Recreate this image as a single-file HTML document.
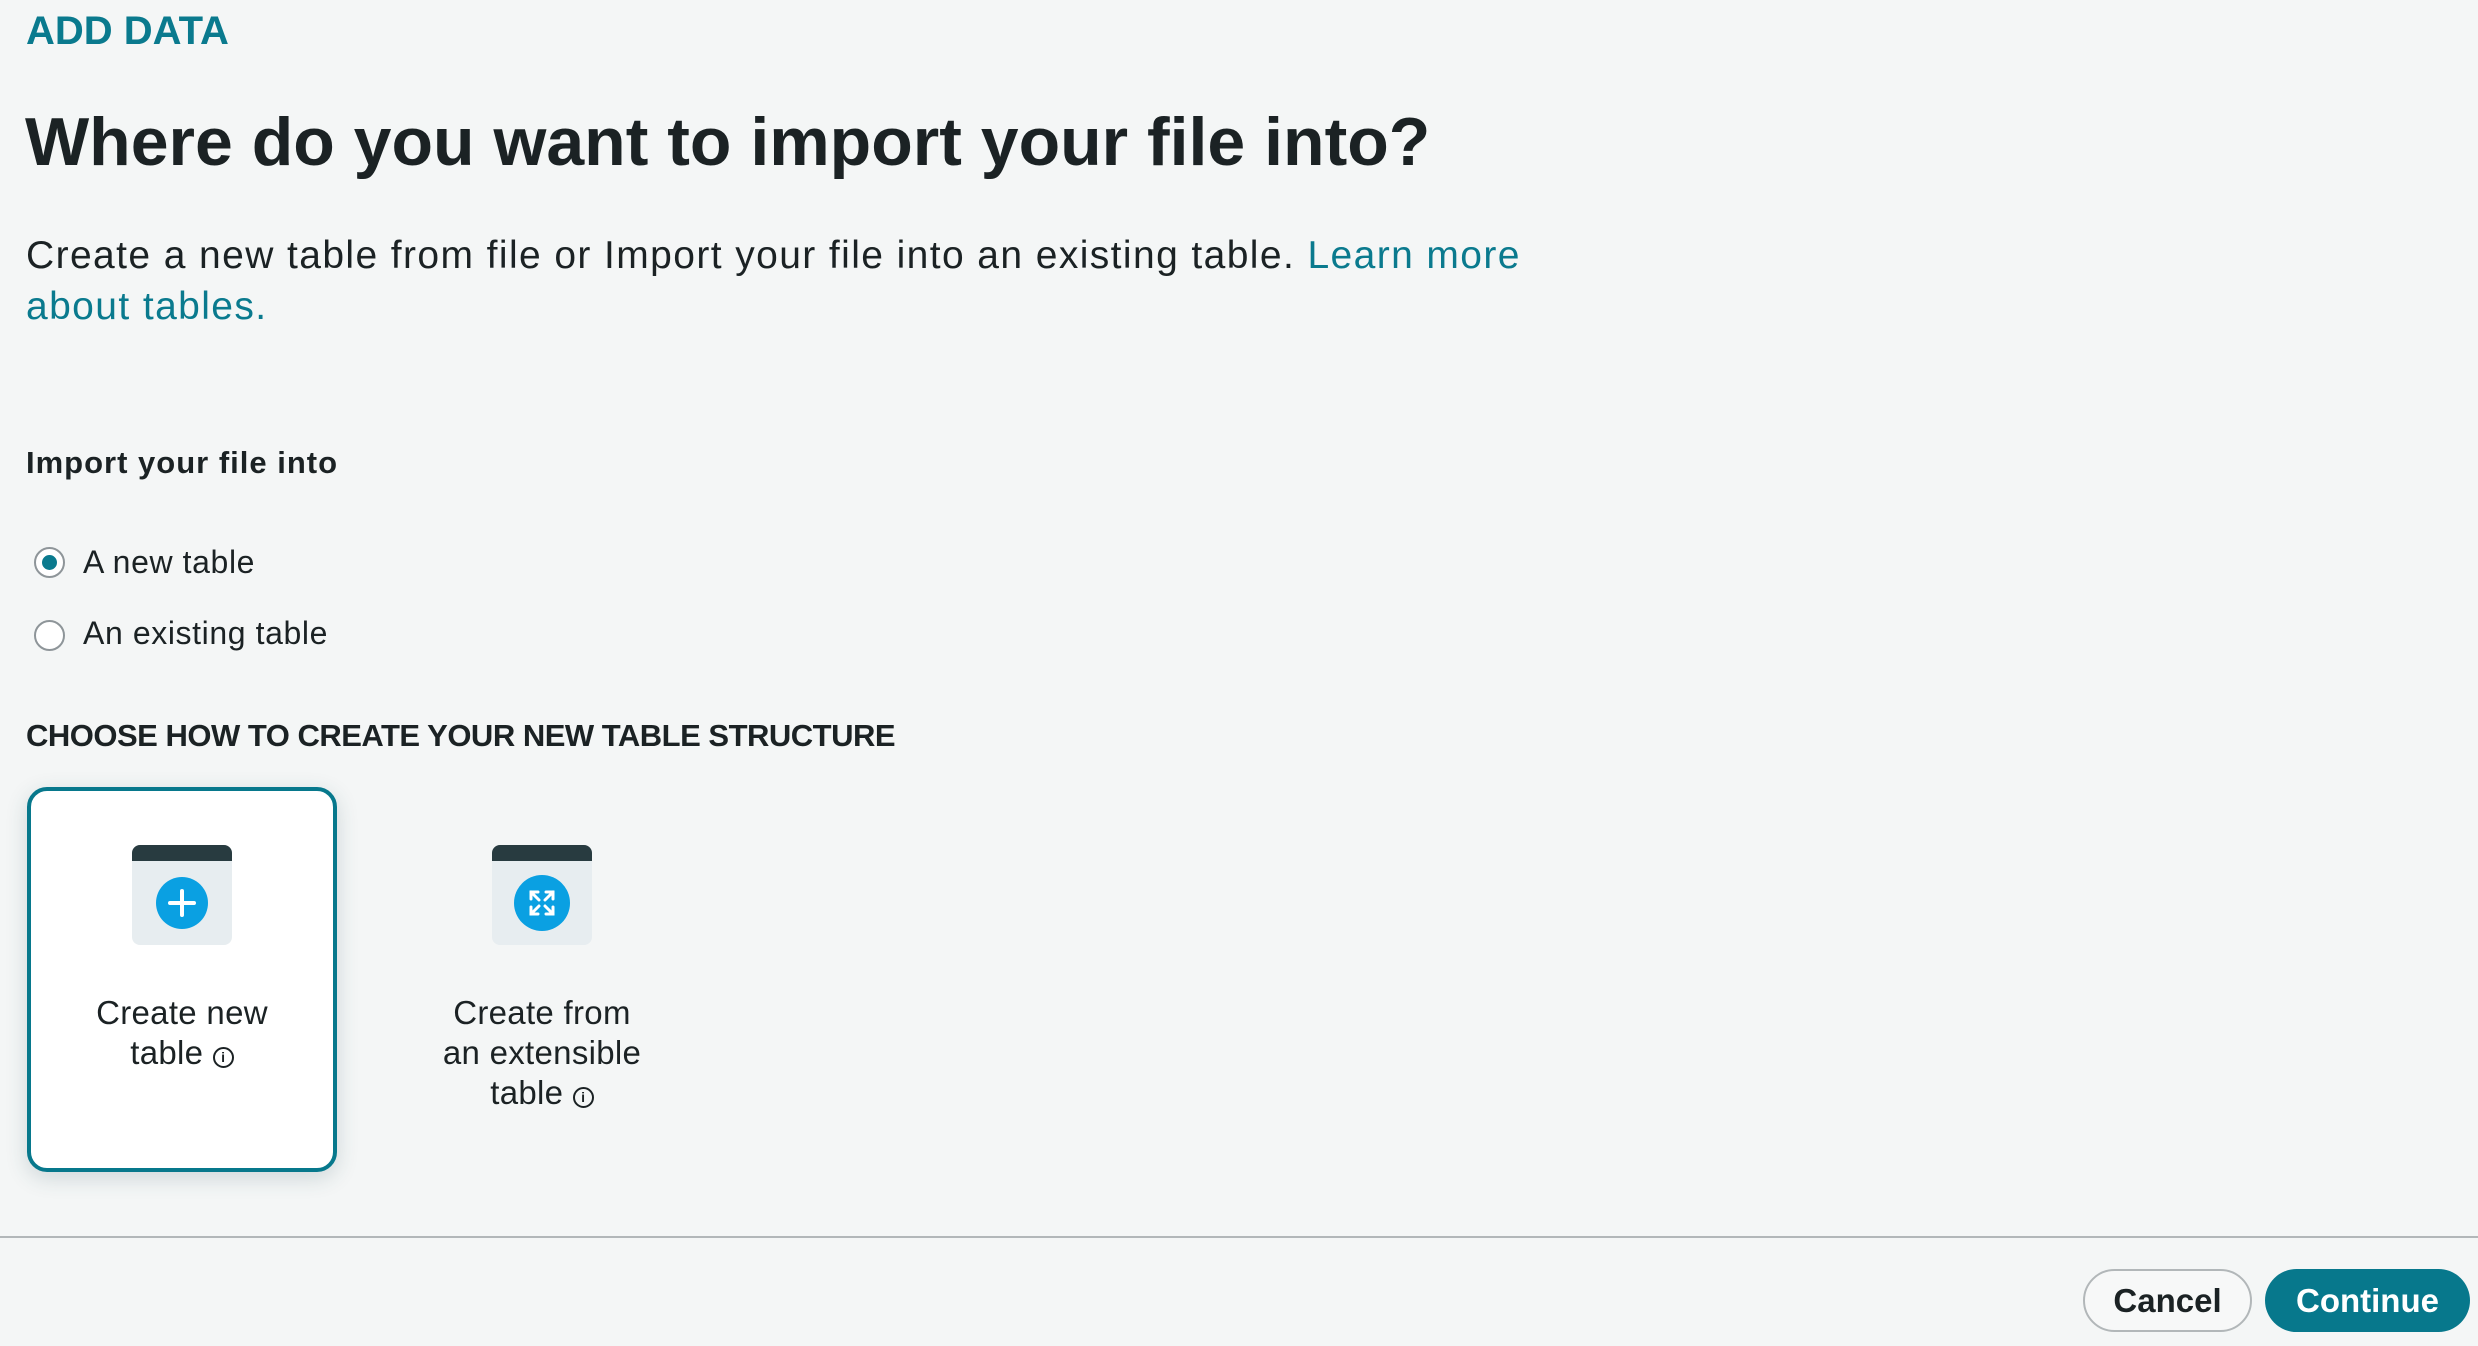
<!DOCTYPE html>
<html><head><meta charset="utf-8"><style>
*{margin:0;padding:0;box-sizing:border-box}
html,body{width:2478px;height:1346px;overflow:hidden}
body{background:#f4f6f6;font-family:"Liberation Sans",sans-serif;color:#1b2224;position:relative}
.a{position:absolute;white-space:nowrap}
.teal{color:#0a7a8e}
.radio{position:absolute;width:31px;height:31px;border-radius:50%;border:2px solid #8e9599;background:#fff}
.radio.on::after{content:"";position:absolute;left:6px;top:6px;width:15px;height:15px;border-radius:50%;background:#0a7a8e}
.card{position:absolute;left:27px;top:787px;width:310px;height:385px;border:4px solid #07788c;border-radius:20px;background:#fff;box-shadow:0 6px 22px rgba(40,80,90,.18)}
.ic{position:absolute;width:100px;height:100px;border-radius:8px;background:#e7edf0;overflow:hidden}
.ic .bar{height:16px;background:#283b40}
.ic .c{position:absolute;left:24px;top:32px;width:52px;height:52px;border-radius:50%;background:#0aa0e2}
.lbl{position:absolute;text-align:center;font-size:33px;line-height:40px;width:340px;letter-spacing:0.3px}
.info{display:inline-block;width:21px;height:21px;border:2px solid #1b2224;border-radius:50%;font-size:14px;line-height:17px;text-align:center;font-weight:bold;vertical-align:2px}
</style></head><body>
<div class="a teal" style="left:26px;top:7px;font-size:40px;font-weight:bold;line-height:48px">ADD DATA</div>
<div class="a" style="left:25px;top:102px;font-size:68px;font-weight:bold;line-height:80px">Where do you want to import your file into?</div>
<div class="a" style="left:26px;top:230px;font-size:39px;line-height:51px;letter-spacing:1.4px">Create a new table from file or Import your file into an existing table. <span class="teal">Learn more</span></div>
<div class="a teal" style="left:26px;top:281px;font-size:39px;line-height:51px;letter-spacing:1.4px">about tables.</div>
<div class="a" style="left:26px;top:443px;font-size:31px;font-weight:bold;line-height:40px;letter-spacing:1px">Import your file into</div>
<div class="radio on" style="left:34px;top:547px"></div>
<div class="a" style="left:83px;top:542px;font-size:32px;line-height:40px;letter-spacing:0.6px">A new table</div>
<div class="radio" style="left:34px;top:620px"></div>
<div class="a" style="left:83px;top:613px;font-size:32px;line-height:40px;letter-spacing:0.6px">An existing table</div>
<div class="a" style="left:26px;top:716px;font-size:31px;font-weight:bold;line-height:40px;letter-spacing:-0.5px">CHOOSE HOW TO CREATE YOUR NEW TABLE STRUCTURE</div>
<div class="card"></div>
<div class="ic" style="left:132px;top:845px"><div class="bar"></div><div class="c"><svg width="52" height="52" viewBox="0 0 52 52"><path d="M26 14v24M14 26h24" stroke="#fff" stroke-width="4" stroke-linecap="round"/></svg></div></div>
<div class="ic" style="left:492px;top:845px"><div class="bar"></div><div class="c" style="left:22px;top:30px;width:56px;height:56px"><svg width="56" height="56" viewBox="0 0 56 56" fill="none" stroke="#fff" stroke-width="3" stroke-linecap="round"><path d="M17 24v-7h7M17 17l8 8M39 24v-7h-7M39 17l-8 8M17 32v7h7M17 39l8-8M39 32v7h-7M39 39l-8-8"/></svg></div></div>
<div class="lbl" style="left:12px;top:993px">Create new<br>table <span class="info">i</span></div>
<div class="lbl" style="left:372px;top:993px">Create from<br>an extensible<br>table <span class="info">i</span></div>
<div style="position:absolute;left:0;top:1236px;width:2478px;height:2px;background:#b2b7b9"></div>
<div style="position:absolute;left:2083px;top:1269px;width:169px;height:63px;border:2px solid #b2b7b9;border-radius:32px;background:#f7f8f8;text-align:center;font-size:33px;font-weight:bold;line-height:59px">Cancel</div>
<div style="position:absolute;left:2265px;top:1269px;width:205px;height:63px;border-radius:32px;background:#07788c;color:#fff;text-align:center;font-size:33px;font-weight:bold;line-height:63px">Continue</div>
</body></html>
